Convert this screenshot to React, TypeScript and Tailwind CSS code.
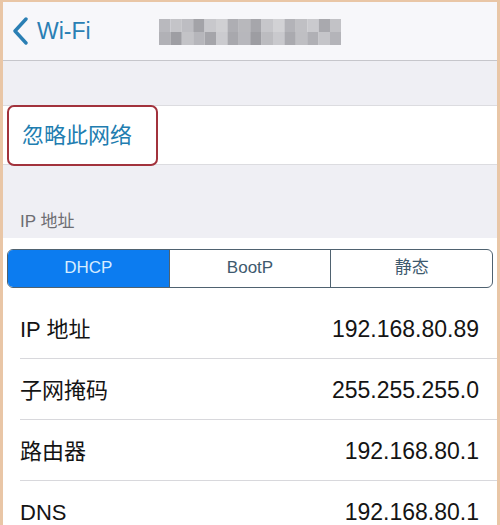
import {Fragment} from 'react';

type InfoRow = {
	label: string;
	value: string;
};

const rows: InfoRow[] = [
	{label: 'IP 地址', value: '192.168.80.89'},
	{label: '子网掩码', value: '255.255.255.0'},
	{label: '路由器', value: '192.168.80.1'},
	{label: 'DNS', value: '192.168.80.1'},
];

const segments = ['DHCP', 'BootP', '静态'];

// mosaic shades for the blurred network name
const mosaicTop = ['#b9b9be', '#c4c4c8', '#bdbdc2', '#a3a3a8', '#c8c8cc', '#d0d0d3', '#aeaeb3', '#b8b8bc', '#a6a6ab', '#c6c6ca', '#d2d2d5', '#b3b3b8', '#c0c0c4', '#cacace', '#a9a9ae', '#c2c2c6'];
const mosaicBottom = ['#b1b1b6', '#9e9ea3', '#c3c3c7', '#b6b6bb', '#a5a5aa', '#cbcbcf', '#a8a8ad', '#b7b7bc', '#9d9da2', '#bcbcc0', '#c9c9cd', '#aaaaaf', '#bfbfc3', '#b0b0b5', '#c5c5c9', '#b4b4b9'];

const Mosaic = () => (
	<svg width="182" height="26" viewBox="0 0 182 26">
		{mosaicTop.map((color, index) => (
			<rect key={`t${index}`} x={index * 11.4} y={0} width={11.4} height={13} fill={color}/>
		))}
		{mosaicBottom.map((color, index) => (
			<rect key={`b${index}`} x={index * 11.4} y={13} width={11.4} height={13} fill={color}/>
		))}
	</svg>
);

const App = () => (
	<div className="w-[500px] h-[525px] overflow-hidden bg-[#efeff4] border-x-[3px] border-t-2 border-[#e9c6a6] font-['Liberation_Sans','Noto_Sans_CJK_SC',sans-serif]">
		<div className="h-[59px] bg-[#f7f7fa] border-b border-[#c6c6cb] flex items-center">
			<svg className="ml-[9px]" width="17" height="28" viewBox="0 0 17 28">
				<path d="M14 2 L3 14 L14 26" fill="none" stroke="#2a7fb4" strokeWidth="3.4" strokeLinecap="round" strokeLinejoin="round"/>
			</svg>
			<span className="ml-[8px] text-[23px] text-[#2a7fb4] leading-none">Wi-Fi</span>
			<div className="ml-[68px] mt-[2px]">
				<Mosaic/>
			</div>
		</div>
		<div className="h-[44px]"/>
		<div className="relative h-[60px] bg-white border-y border-[#dcdce0] flex items-center pl-[19px]">
			<span className="text-[22px] text-[#217db0]">忽略此网络</span>
			<div className="absolute left-[4px] -top-[1px] w-[151px] h-[61px] rounded-[7px] border-2 border-[#a2323c]"/>
		</div>
		<div className="h-[73px] flex items-end pl-[17px] pb-[4px]">
			<span className="text-[17px] text-[#6d6d72]">IP 地址</span>
		</div>
		<div className="bg-white">
			<div className="h-[60px] flex items-center px-[4px]">
				<div className="flex w-full h-[39px] rounded-[6px] border border-[#4f6270] overflow-hidden">
					{segments.map((segment, index) => (
						<div
							key={segment}
							className={index === 0
								? 'flex-1 flex items-center justify-center bg-[#0c7cf0] text-[17px] text-[#d6ecff]'
								: 'flex-1 flex items-center justify-center border-l border-[#4f6270] text-[17px] text-[#3e5a6e]'}
						>
							{segment}
						</div>
					))}
				</div>
			</div>
			{rows.map((row, index) => (
				<Fragment key={row.label}>
					{index > 0 && <div className="ml-[17px] h-px bg-[#d8d8dc]"/>}
					<div className="h-[60px] flex items-center justify-between pl-[17px] pr-[18px] pt-[3px] text-[22px] text-[#141414]">
						<span>{row.label}</span>
						<span className="text-[23px]">{row.value}</span>
					</div>
				</Fragment>
			))}
		</div>
	</div>
);

export default App;
